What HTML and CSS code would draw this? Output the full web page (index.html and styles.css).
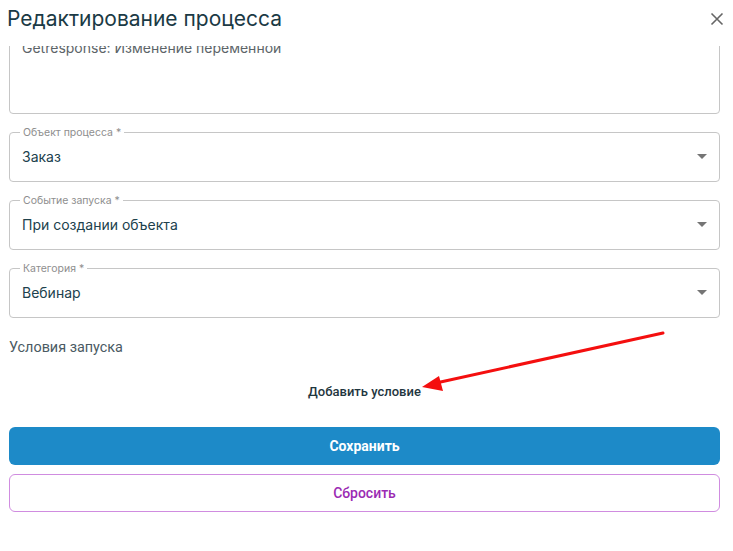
FILE: index.html
```html
<!DOCTYPE html>
<html lang="ru">
<head>
<meta charset="utf-8">
<title>Редактирование процесса</title>
<link rel="stylesheet" href="styles.css">
</head>
<body>
<div class="dialog">
  <header class="head">
    <h2 class="title">Редактирование процесса</h2>
    <button class="close" aria-label="Закрыть">
      <svg width="14" height="14" viewBox="0 0 14 14"><path d="M1.5 1.5L12.5 12.5M12.5 1.5L1.5 12.5" stroke="#666" stroke-width="1.6" fill="none"/></svg>
    </button>
  </header>
  <div class="content">
    <div class="scroll">
      <div class="field area">
        <div class="area-text">Getresponse: Изменение переменной</div>
      </div>
      <fieldset class="field select">
        <legend class="legend">Объект процесса *</legend>
        <span class="value">Заказ</span>
        <svg class="drop" width="10" height="5" viewBox="0 0 10 5"><path d="M0 0L5 5L10 0Z" fill="#757575"/></svg>
      </fieldset>
      <fieldset class="field select">
        <legend class="legend">Событие запуска *</legend>
        <span class="value">При создании объекта</span>
        <svg class="drop" width="10" height="5" viewBox="0 0 10 5"><path d="M0 0L5 5L10 0Z" fill="#757575"/></svg>
      </fieldset>
      <fieldset class="field select">
        <legend class="legend">Категория *</legend>
        <span class="value">Вебинар</span>
        <svg class="drop" width="10" height="5" viewBox="0 0 10 5"><path d="M0 0L5 5L10 0Z" fill="#757575"/></svg>
      </fieldset>
      <div class="cond-title">Условия запуска</div>
      <div class="add-row"><button class="add">Добавить условие</button></div>
      <button class="btn save">Сохранить</button>
      <button class="btn reset">Сбросить</button>
    </div>
  </div>
  <svg class="pointer" width="733" height="551" viewBox="0 0 733 551">
    <line x1="663" y1="333" x2="436" y2="383" stroke="#f40f0f" stroke-width="3" stroke-linecap="round"/>
    <path d="M422 387L439 376L443 391Z" fill="#f40f0f"/>
  </svg>
</div>
</body>
</html>
```
FILE: styles.css
```css
* { box-sizing: border-box; }
html, body { margin: 0; padding: 0; background: #fff; }
body { font-family: Inter, "Noto Sans", sans-serif; color: #1f3d48; }
.dialog { position: relative; width: 733px; height: 551px; overflow: hidden; }
.head { height: 46px; display: flex; align-items: flex-start; justify-content: space-between; padding: 0 9px 0 7px; }
.title { margin: 0; margin-top: 6px; font-size: 21px; font-weight: 400; line-height: 26px; color: #1b3a45; }
.close { border: 0; background: none; padding: 0; margin-top: 12px; width: 14px; height: 14px; display: flex; cursor: pointer; }
.content { height: 505px; overflow: hidden; }
.scroll { padding: 0 13px 0 9px; margin-top: -26px; }
.field { margin: 0 0 13px; border: 1px solid #c6c6c6; border-radius: 4px; min-width: 0; }
.legend { font-size: 10.5px; color: #8e8e8e; padding: 0 3px; margin-left: -2px; line-height: 11px; }
.area { height: 94px; padding: 17px 12px 0; }
.area-text { font-size: 14px; line-height: 20px; color: #5c6468; }
.select { height: 55px; margin-top: 0; display: flex; align-items: center; justify-content: space-between; padding: 0 12px; }
.select .value { font-size: 14px; color: #20414d; margin-top: -6px; }
.select .drop { margin-top: -6px; }
.cond-title { font-family: Roboto, sans-serif; font-size: 14.4px; color: #4a5a63; margin-top: 20px; line-height: 20px; }
.add-row { display: flex; justify-content: center; margin-top: 26px; }
.add { font-family: Roboto, sans-serif; font-weight: 500; font-size: 13px; color: #1f3640; background: none; border: 0; padding: 0; line-height: 16px; }
.btn { display: block; width: 711px; height: 38px; border-radius: 6px; font-family: Roboto, sans-serif; font-size: 14px; cursor: pointer; }
.save { margin-top: 27px; background: #1d8ac8; border: 0; color: #fff; font-weight: 700; }
.reset { margin-top: 9px; background: #fff; border: 1px solid #d08ce0; color: #9b2bb3; font-weight: 500; }
.pointer { position: absolute; left: 0; top: 0; pointer-events: none; }
```
